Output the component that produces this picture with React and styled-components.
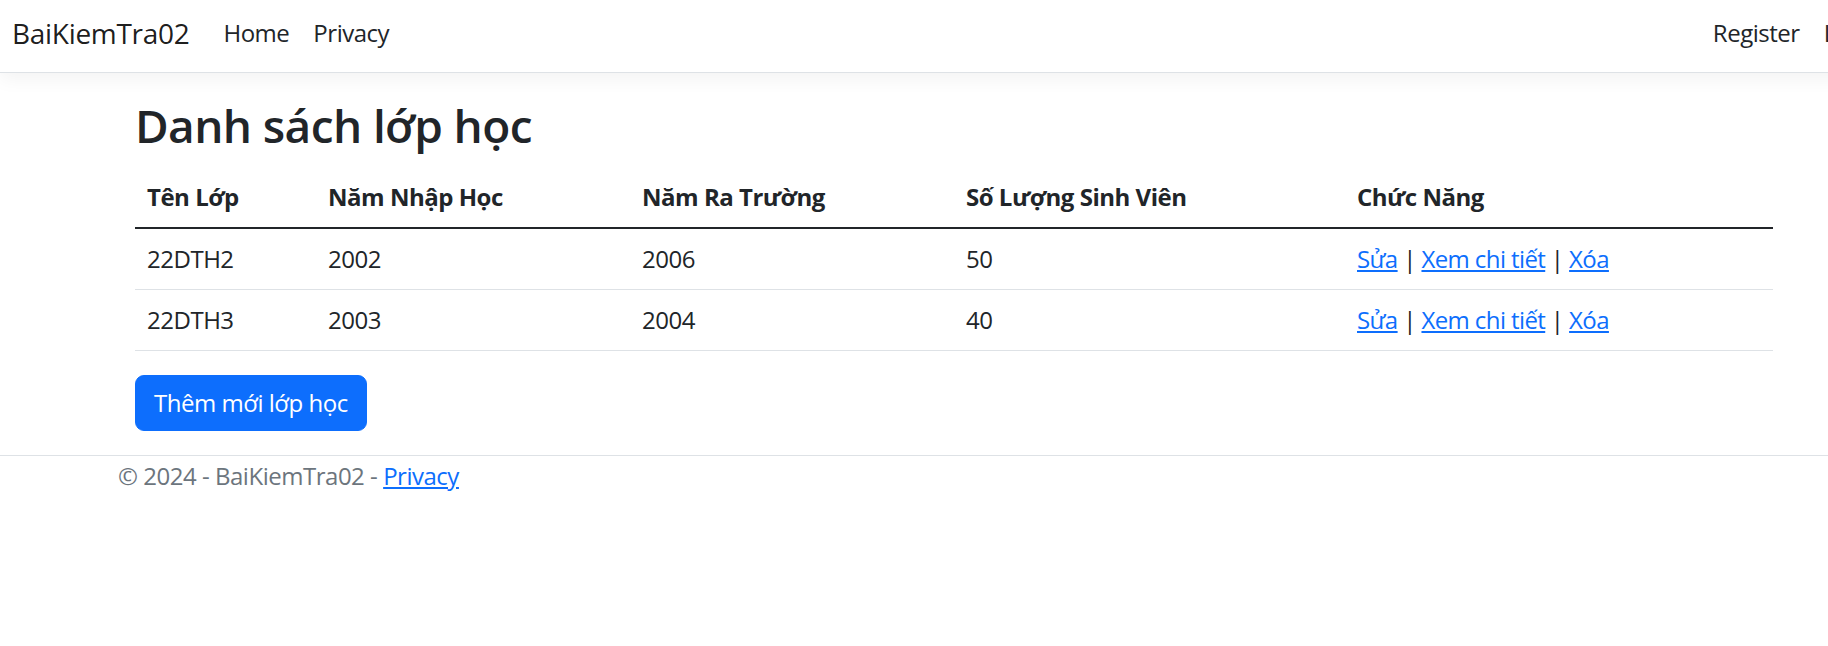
import React from "react";
import styled, { createGlobalStyle } from "styled-components";

const FONT = `"Open Sans", "Noto Sans", "Liberation Sans", sans-serif`;

const GlobalStyle = createGlobalStyle`
    html, body {
        margin: 0;
        padding: 0;
        background: #fff;
    }

    body {
        font-family: ${FONT};
        font-size: 24px;
        line-height: 1.5;
        letter-spacing: -0.02em;
        color: #212529;
        overflow-x: hidden;
    }
`;

const Page = styled.div`
    width: 1906px;
`;

const Navbar = styled.header`
    display: flex;
    align-items: center;
    height: 66px;
    padding: 0 12px 6px;
    border-bottom: 1px solid #dee2e6;
    box-shadow: 0 6px 18px rgba(0, 0, 0, 0.05);
    margin-bottom: 24px;
`;

const Brand = styled.a`
    font-size: 28px;
    letter-spacing: -0.3px;
    color: rgba(0, 0, 0, 0.9);
    text-decoration: none;
    margin-right: 22px;
`;

const NavList = styled.ul`
    display: flex;
    list-style: none;
    margin: 0;
    padding: 0;
    margin-left: ${({ $right }) => ($right ? "auto" : "0")};
`;

const NavLink = styled.a`
    display: block;
    padding: 12px;
    color: #212529;
    text-decoration: none;
`;

const Main = styled.main`
    padding: 0 0 24px 135px;
`;

const Title = styled.h2`
    margin: 3px 0 12px;
    font-size: 46px;
    font-weight: 600;
    letter-spacing: -0.6px;
    line-height: 57.6px;
`;

const Table = styled.table`
    width: 1638px;
    table-layout: fixed;
    border-collapse: collapse;
    margin-bottom: 24px;
`;

const HeadCell = styled.th`
    text-align: left;
    font-weight: 700;
    padding: 12px;
    border-bottom: 2px solid #212529;
`;

const Cell = styled.td`
    padding: 12px;
    border-bottom: 1px solid #dee2e6;
`;

const Link = styled.a`
    color: #0d6efd;
    text-decoration: underline;
`;

const Actions = styled.span`
    letter-spacing: -0.6px;
`;

const PrimaryButton = styled.a`
    display: inline-block;
    padding: 9px 18px;
    font-size: 24px;
    line-height: 36px;
    color: #fff;
    background: #0d6efd;
    border: 1px solid #0d6efd;
    border-radius: 9px;
    text-decoration: none;
`;

const Footer = styled.footer`
    border-top: 1px solid #dee2e6;
    padding: 2px 0 0 118px;
    line-height: 36px;
    color: #6c757d;
    white-space: nowrap;
`;

const columns = [
    { label: "Tên Lớp", width: 181 },
    { label: "Năm Nhập Học", width: 314 },
    { label: "Năm Ra Trường", width: 324 },
    { label: "Số Lượng Sinh Viên", width: 391 },
    { label: "Chức Năng", width: 428 },
];

const classes = [
    { name: "22DTH2", start: "2002", end: "2006", count: 50 },
    { name: "22DTH3", start: "2003", end: "2004", count: 40 },
];

const App = () => {
    return (
        <Page>
            <GlobalStyle />
            <Navbar>
                <Brand href="#">BaiKiemTra02</Brand>
                <NavList>
                    <li>
                        <NavLink href="#">Home</NavLink>
                    </li>
                    <li>
                        <NavLink href="#">Privacy</NavLink>
                    </li>
                </NavList>
                <NavList $right>
                    <li>
                        <NavLink href="#">Register</NavLink>
                    </li>
                    <li>
                        <NavLink href="#">Login</NavLink>
                    </li>
                </NavList>
            </Navbar>
            <Main>
                <Title>Danh sách lớp học</Title>
                <Table>
                    <colgroup>
                        {columns.map((col) => (
                            <col key={col.label} style={{ width: col.width }} />
                        ))}
                    </colgroup>
                    <thead>
                        <tr>
                            {columns.map((col) => (
                                <HeadCell key={col.label}>{col.label}</HeadCell>
                            ))}
                        </tr>
                    </thead>
                    <tbody>
                        {classes.map((c) => (
                            <tr key={c.name}>
                                <Cell>{c.name}</Cell>
                                <Cell>{c.start}</Cell>
                                <Cell>{c.end}</Cell>
                                <Cell>{c.count}</Cell>
                                <Cell>
                                    <Actions>
                                        <Link href="#">Sửa</Link> |{" "}
                                        <Link href="#">Xem chi tiết</Link> |{" "}
                                        <Link href="#">Xóa</Link>
                                    </Actions>
                                </Cell>
                            </tr>
                        ))}
                    </tbody>
                </Table>
                <PrimaryButton href="#">Thêm mới lớp học</PrimaryButton>
            </Main>
            <Footer>
                © 2024 - BaiKiemTra02 - <Link href="#">Privacy</Link>
            </Footer>
        </Page>
    );
};

export default App;
